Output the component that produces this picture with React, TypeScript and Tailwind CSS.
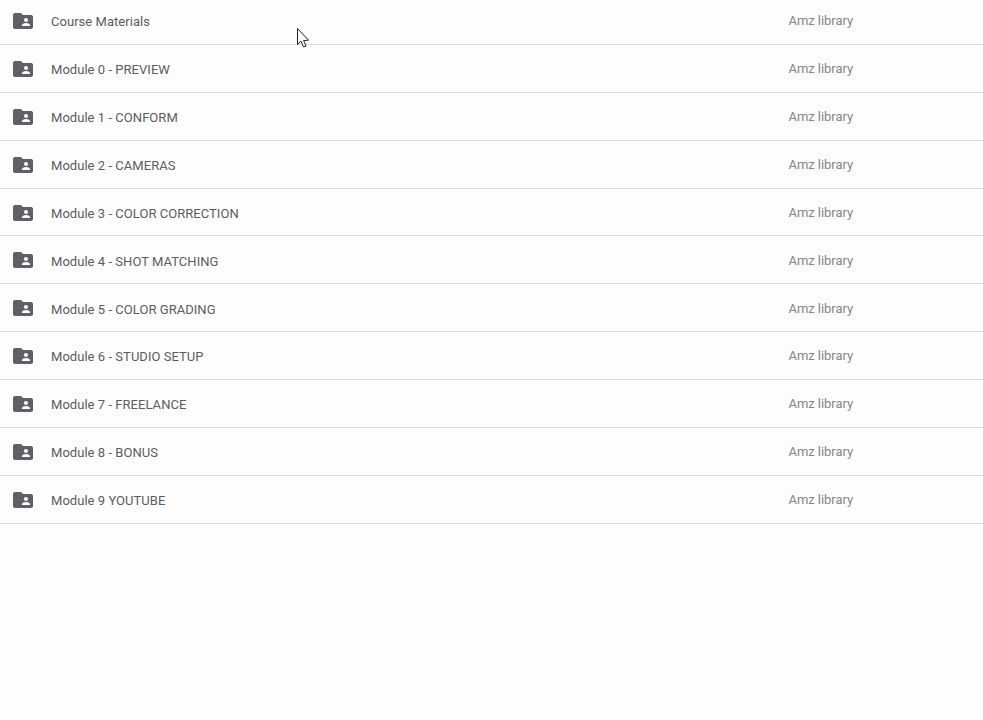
import React from 'react';

const folders = [
  'Course Materials',
  'Module 0 - PREVIEW',
  'Module 1 - CONFORM',
  'Module 2 - CAMERAS',
  'Module 3 - COLOR CORRECTION',
  'Module 4 - SHOT MATCHING',
  'Module 5 - COLOR GRADING',
  'Module 6 - STUDIO SETUP',
  'Module 7 - FREELANCE',
  'Module 8 - BONUS',
  'Module 9 YOUTUBE',
];

const FolderIcon = () => (
  <svg viewBox="0 0 24 24" className="w-6 h-6 shrink-0 fill-[#5f5f65]">
    <path d="M20 6h-8l-2-2H4c-1.1 0-1.99.9-1.99 2L2 18c0 1.1.9 2 2 2h16c1.1 0 2-.9 2-2V8c0-1.1-.9-2-2-2zm-5 3c1.1 0 2 .9 2 2s-.9 2-2 2-2-.9-2-2 .9-2 2-2zm4 8h-8v-1c0-1.33 2.67-2 4-2s4 .67 4 2v1z" />
  </svg>
);

const App: React.FC = () => {
  return (
    <div className="relative w-[983px] h-[720px] overflow-hidden bg-[#fefdfe] font-['Roboto',sans-serif]">
      {/* list is scrolled 3px */}
      <div className="-mt-[3px]">
        {folders.map((name) => (
          <div
            key={name}
            className="flex items-center h-[47.9px] pt-[1px] pl-[11px] border-b border-[#dcdcde]"
          >
            <FolderIcon />
            <span className="ml-4 pt-[2px] w-[737.5px] text-[13px] font-[450] tracking-[0.04px] text-[#5c5b61]">{name}</span>
            <span className="text-[13px] tracking-[-0.05px] text-[#85858a]">Amz library</span>
          </div>
        ))}
      </div>

      {/* Mouse pointer */}
      <svg viewBox="0 0 14 22" className="absolute left-[296px] top-[27px] w-[14px] h-[22px]">
        <path
          d="M1.5 1.5V17.5L5 14.2L7.6 20L10 19L7.6 13.6L12.5 13.2Z"
          fill="#fff"
          stroke="#222"
          strokeWidth="1"
          strokeLinejoin="round"
        />
      </svg>
    </div>
  );
};

export default App;
